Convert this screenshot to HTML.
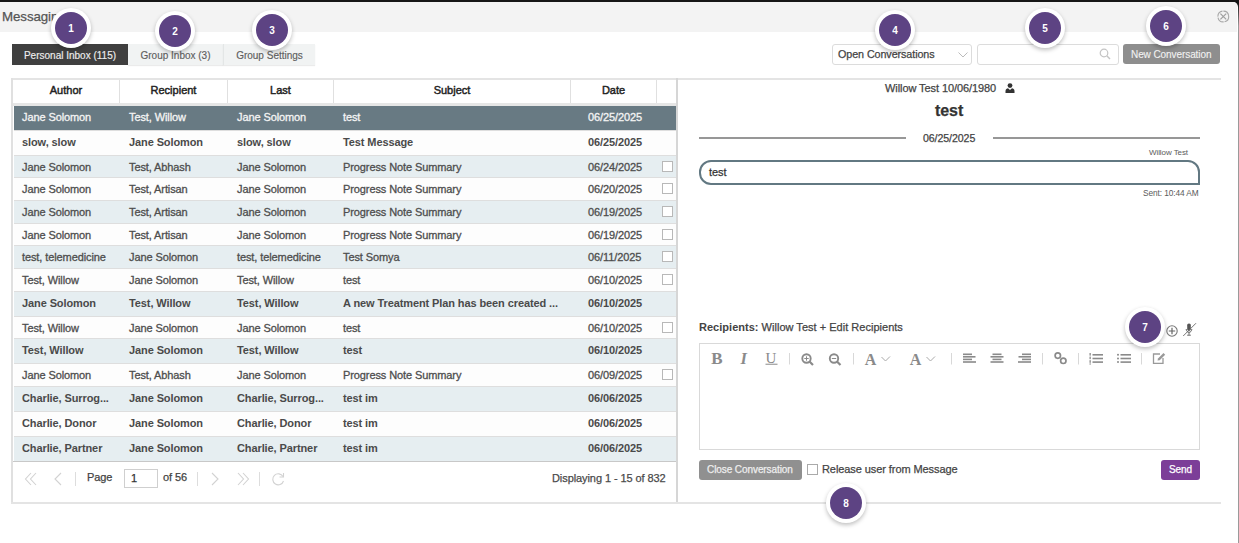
<!DOCTYPE html>
<html><head><meta charset="utf-8">
<style>
*{margin:0;padding:0;box-sizing:border-box}
html,body{width:1239px;height:543px;overflow:hidden;background:#fff;font-family:"Liberation Sans",sans-serif;color:#444}
.a{position:absolute}
#top{left:0;top:0;width:1239px;height:2px;background:#141414}
#hdr{left:0;top:2px;width:1237px;height:30px;background:#f3f3f3;border-top-right-radius:4px}
#rb{left:1238px;top:0;width:1px;height:543px;background:#9a9a9a}
.t{white-space:nowrap;position:absolute;-webkit-text-stroke:0.25px currentColor;letter-spacing:-0.08px}
.tab{position:absolute;top:44px;height:21px;font-size:10px;line-height:23px;text-align:center;-webkit-text-stroke:0.15px currentColor}
.badge{position:absolute;width:40px;height:40px;border-radius:50%;background:#fff;box-shadow:0 2px 4px rgba(0,0,0,.25)}
.badge i{position:absolute;left:4px;top:4px;width:32px;height:32px;border-radius:50%;background:#5d4383;color:#fff;font-style:normal;font-weight:bold;font-size:10px;line-height:33px;text-align:center}
.row{position:absolute;left:14px;width:662px;font-size:11px;color:#4e4e4e;-webkit-text-stroke:0.3px currentColor}
.row .c{padding-top:0;line-height:22px;letter-spacing:-0.1px}
.row.bd{font-weight:bold;color:#4a4a4a;-webkit-text-stroke:0}
.row.bd .c,.row.sl .c{padding-top:0}
.row .c{position:absolute;top:0;white-space:nowrap}
.hl{position:absolute;left:14px;width:662px;height:1px;background:#dedede}
.cb{position:absolute;left:662px;width:11px;height:11px;border:1px solid #b8b8b8;background:#fff}
.vl{position:absolute;top:80px;width:1px;height:24px;background:#e0e0e0}
.hc{position:absolute;top:79px;height:25px;line-height:23px;font-size:11px;color:#222;text-align:center;-webkit-text-stroke:0.45px currentColor}
</style></head><body>
<div class="a" id="top"></div>
<div class="a" style="left:0;top:0;width:1239px;height:543px;background:linear-gradient(#161616 0,#161616 4px,#9a9a9a 26px)"></div>
<div class="a" style="left:0;top:2px;width:1238px;height:541px;background:#fff;border-top-right-radius:5px"></div>
<div class="a" id="hdr"></div>
<div class="t" style="left:2px;top:9px;font-size:13.3px;color:#555">Messaging</div>
<!-- close icon -->
<svg class="a" style="left:1217px;top:10px" width="13" height="13" viewBox="0 0 13 13"><circle cx="6.3" cy="6.5" r="5.4" fill="none" stroke="#a8a8a8" stroke-width="1.1" stroke-dasharray="7.5 1" transform="rotate(-6 6.3 6.5)"/><path d="M3.4 3.6L9.2 9.4M9.2 3.6L3.4 9.4" stroke="#a0a0a0" stroke-width="1.2"/></svg>
<!-- tabs -->
<div class="tab" style="left:12px;width:116px;background:#3f3f3f;color:#eee">Personal Inbox (115)</div>
<div class="tab" style="left:128px;width:95px;background:#f1f3f3;color:#5e5e5e;box-shadow:0 1px 1px rgba(0,0,0,.08)">Group Inbox (3)</div>
<div class="tab" style="left:223px;width:92px;background:#f1f3f3;color:#5e5e5e;border-left:1px solid #e3e6e6;box-shadow:0 1px 1px rgba(0,0,0,.08)">Group Settings</div>

<!-- top right controls -->
<div class="a" style="left:832px;top:44px;width:140px;height:21px;border:1px solid #dcdcdc;border-radius:3px;background:#fff"></div>
<div class="t" style="left:838px;top:48px;font-size:10.75px;color:#444">Open Conversations</div>
<svg class="a" style="left:958px;top:52px" width="10" height="6" viewBox="0 0 10 6"><path d="M0.5 0.5L5 5L9.5 0.5" fill="none" stroke="#bbb" stroke-width="1"/></svg>
<div class="a" style="left:977px;top:44px;width:142px;height:21px;border:1px solid #dcdcdc;border-radius:3px;background:#fff"></div>
<svg class="a" style="left:1099px;top:48px" width="12" height="12" viewBox="0 0 12 12"><circle cx="5" cy="5" r="3.8" fill="none" stroke="#c4c4c4" stroke-width="1.2"/><path d="M7.8 7.8L11 11" stroke="#c4c4c4" stroke-width="1.4"/></svg>
<div class="a" style="left:1123px;top:44px;width:97px;height:20px;border-radius:3px;background:#8e8e8e"></div>
<div class="t" style="left:1131px;top:49px;font-size:10px;color:#f2f2f2;-webkit-text-stroke:0.1px currentColor">New Conversation</div>

<!-- table frame -->
<div class="a" style="left:11px;top:78px;width:1210px;height:2px;background:#e4e4e4"></div>
<div class="a" style="left:11px;top:78px;width:2px;height:426px;background:#e0e0e0"></div>
<div class="a" style="left:676px;top:78px;width:2px;height:426px;background:#d6d6d6"></div>
<div class="a" style="left:11px;top:502px;width:1210px;height:2px;background:#e4e4e4"></div>

<!-- header -->
<div class="vl" style="left:119px"></div>
<div class="vl" style="left:227px"></div>
<div class="vl" style="left:333px"></div>
<div class="vl" style="left:570px"></div>
<div class="vl" style="left:656px"></div>
<div class="a" style="left:13px;top:103px;width:663px;height:3px;background:#e6e6e6"></div>
<div class="hc" style="left:13px;width:106px">Author</div>
<div class="hc" style="left:120px;width:107px">Recipient</div>
<div class="hc" style="left:228px;width:105px">Last</div>
<div class="hc" style="left:334px;width:236px">Subject</div>
<div class="hc" style="left:571px;width:85px">Date</div>

<div class="row sl" style="top:106px;height:24px;line-height:24px;background:#e6eef1;background:#687a83;color:#f4f4f4"><span class="c" style="left:8px">Jane Solomon</span><span class="c" style="left:115px">Test, Willow</span><span class="c" style="left:223px">Jane Solomon</span><span class="c" style="left:329px">test</span><span class="c" style="left:574px">06/25/2025</span></div>
<div class="hl" style="top:130px"></div>
<div class="row bd" style="top:131px;height:24px;line-height:24px;background:#fdfdfd"><span class="c" style="left:8px">slow, slow</span><span class="c" style="left:115px">Jane Solomon</span><span class="c" style="left:223px">slow, slow</span><span class="c" style="left:329px">Test Message</span><span class="c" style="left:574px">06/25/2025</span></div>
<div class="hl" style="top:155px"></div>
<div class="row" style="top:156px;height:21px;line-height:21px;background:#e6eef1"><span class="c" style="left:8px">Jane Solomon</span><span class="c" style="left:115px">Test, Abhash</span><span class="c" style="left:223px">Jane Solomon</span><span class="c" style="left:329px">Progress Note Summary</span><span class="c" style="left:574px">06/24/2025</span></div>
<div class="cb" style="top:161px"></div>
<div class="hl" style="top:177px"></div>
<div class="row" style="top:178px;height:22px;line-height:22px;background:#fdfdfd"><span class="c" style="left:8px">Jane Solomon</span><span class="c" style="left:115px">Test, Artisan</span><span class="c" style="left:223px">Jane Solomon</span><span class="c" style="left:329px">Progress Note Summary</span><span class="c" style="left:574px">06/20/2025</span></div>
<div class="cb" style="top:183px"></div>
<div class="hl" style="top:200px"></div>
<div class="row" style="top:201px;height:22px;line-height:22px;background:#e6eef1"><span class="c" style="left:8px">Jane Solomon</span><span class="c" style="left:115px">Test, Artisan</span><span class="c" style="left:223px">Jane Solomon</span><span class="c" style="left:329px">Progress Note Summary</span><span class="c" style="left:574px">06/19/2025</span></div>
<div class="cb" style="top:206px"></div>
<div class="hl" style="top:223px"></div>
<div class="row" style="top:224px;height:21px;line-height:21px;background:#fdfdfd"><span class="c" style="left:8px">Jane Solomon</span><span class="c" style="left:115px">Test, Artisan</span><span class="c" style="left:223px">Jane Solomon</span><span class="c" style="left:329px">Progress Note Summary</span><span class="c" style="left:574px">06/19/2025</span></div>
<div class="cb" style="top:229px"></div>
<div class="hl" style="top:245px"></div>
<div class="row" style="top:246px;height:22px;line-height:22px;background:#e6eef1"><span class="c" style="left:8px">test, telemedicine</span><span class="c" style="left:115px">Jane Solomon</span><span class="c" style="left:223px">test, telemedicine</span><span class="c" style="left:329px">Test Somya</span><span class="c" style="left:574px">06/11/2025</span></div>
<div class="cb" style="top:251px"></div>
<div class="hl" style="top:268px"></div>
<div class="row" style="top:269px;height:22px;line-height:22px;background:#fdfdfd"><span class="c" style="left:8px">Test, Willow</span><span class="c" style="left:115px">Jane Solomon</span><span class="c" style="left:223px">Test, Willow</span><span class="c" style="left:329px">test</span><span class="c" style="left:574px">06/10/2025</span></div>
<div class="cb" style="top:274px"></div>
<div class="hl" style="top:291px"></div>
<div class="row bd" style="top:292px;height:24px;line-height:24px;background:#e6eef1"><span class="c" style="left:8px">Jane Solomon</span><span class="c" style="left:115px">Test, Willow</span><span class="c" style="left:223px">Test, Willow</span><span class="c" style="left:329px">A new Treatment Plan has been created ...</span><span class="c" style="left:574px">06/10/2025</span></div>
<div class="hl" style="top:316px"></div>
<div class="row" style="top:317px;height:21px;line-height:21px;background:#fdfdfd"><span class="c" style="left:8px">Test, Willow</span><span class="c" style="left:115px">Jane Solomon</span><span class="c" style="left:223px">Jane Solomon</span><span class="c" style="left:329px">test</span><span class="c" style="left:574px">06/10/2025</span></div>
<div class="cb" style="top:322px"></div>
<div class="hl" style="top:338px"></div>
<div class="row bd" style="top:339px;height:24px;line-height:24px;background:#e6eef1"><span class="c" style="left:8px">Test, Willow</span><span class="c" style="left:115px">Jane Solomon</span><span class="c" style="left:223px">Test, Willow</span><span class="c" style="left:329px">test</span><span class="c" style="left:574px">06/10/2025</span></div>
<div class="hl" style="top:363px"></div>
<div class="row" style="top:364px;height:22px;line-height:22px;background:#fdfdfd"><span class="c" style="left:8px">Jane Solomon</span><span class="c" style="left:115px">Test, Abhash</span><span class="c" style="left:223px">Jane Solomon</span><span class="c" style="left:329px">Progress Note Summary</span><span class="c" style="left:574px">06/09/2025</span></div>
<div class="cb" style="top:369px"></div>
<div class="hl" style="top:386px"></div>
<div class="row bd" style="top:387px;height:24px;line-height:24px;background:#e6eef1"><span class="c" style="left:8px">Charlie, Surrog...</span><span class="c" style="left:115px">Jane Solomon</span><span class="c" style="left:223px">Charlie, Surrog...</span><span class="c" style="left:329px">test im</span><span class="c" style="left:574px">06/06/2025</span></div>
<div class="hl" style="top:411px"></div>
<div class="row bd" style="top:412px;height:24px;line-height:24px;background:#fdfdfd"><span class="c" style="left:8px">Charlie, Donor</span><span class="c" style="left:115px">Jane Solomon</span><span class="c" style="left:223px">Charlie, Donor</span><span class="c" style="left:329px">test im</span><span class="c" style="left:574px">06/06/2025</span></div>
<div class="hl" style="top:436px"></div>
<div class="row bd" style="top:437px;height:24px;line-height:24px;background:#e6eef1"><span class="c" style="left:8px">Charlie, Partner</span><span class="c" style="left:115px">Jane Solomon</span><span class="c" style="left:223px">Charlie, Partner</span><span class="c" style="left:329px">test im</span><span class="c" style="left:574px">06/06/2025</span></div>
<!-- toolbar -->
<div class="a" style="left:13px;top:461px;width:663px;height:1px;background:#c8c8c8"></div>


<!-- pager -->
<svg class="a" style="left:24px;top:472px" width="14" height="14" viewBox="0 0 14 14"><path d="M7 1L1.5 7L7 13M12 1L6.5 7L12 13" fill="none" stroke="#d2d2d2" stroke-width="1.1"/></svg>
<svg class="a" style="left:53px;top:472px" width="10" height="14" viewBox="0 0 10 14"><path d="M8 1L2 7L8 13" fill="none" stroke="#d2d2d2" stroke-width="1.1"/></svg>
<div class="a" style="left:75px;top:472px;width:1px;height:14px;background:#ddd"></div>
<div class="t" style="left:87px;top:471px;font-size:11px;color:#444">Page</div>
<div class="a" style="left:124px;top:469px;width:34px;height:19px;border:1px solid #cfcfcf;background:#fff"></div>
<div class="t" style="left:131px;top:472px;font-size:11px;color:#333">1</div>
<div class="t" style="left:163px;top:471px;font-size:11px;color:#444">of 56</div>
<div class="a" style="left:197px;top:472px;width:1px;height:14px;background:#ddd"></div>
<svg class="a" style="left:210px;top:472px" width="10" height="14" viewBox="0 0 10 14"><path d="M2 1L8 7L2 13" fill="none" stroke="#d2d2d2" stroke-width="1.1"/></svg>
<svg class="a" style="left:236px;top:472px" width="14" height="14" viewBox="0 0 14 14"><path d="M2 1L7.5 7L2 13M7 1L12.5 7L7 13" fill="none" stroke="#d2d2d2" stroke-width="1.1"/></svg>
<div class="a" style="left:259px;top:472px;width:1px;height:14px;background:#ddd"></div>
<svg class="a" style="left:271px;top:472px" width="15" height="14" viewBox="0 0 15 14"><path d="M12 4.5A5.5 5.5 0 1 0 12.5 9" fill="none" stroke="#d2d2d2" stroke-width="1.1"/><path d="M12.5 1V5H8.5" fill="none" stroke="#d2d2d2" stroke-width="1.1"/></svg>
<div class="t" style="left:552px;top:472px;font-size:11px;color:#4a4a4a">Displaying 1 - 15 of 832</div>

<!-- right panel -->
<div class="t" style="left:885px;top:82px;font-size:11px;color:#444">Willow Test 10/06/1980</div>
<svg class="a" style="left:1005px;top:83px" width="10" height="10" viewBox="0 0 10 10"><circle cx="5" cy="2.6" r="2.4" fill="#333"/><path d="M0.5 10V8C0.5 6 2 5.2 3 5.2L5 7L7 5.2C8 5.2 9.5 6 9.5 8V10Z" fill="#333"/></svg>
<div class="t" style="left:935px;top:102px;font-size:16px;font-weight:bold;color:#333">test</div>
<div class="a" style="left:699px;top:137px;width:207px;height:2px;background:#979797"></div>
<div class="a" style="left:993px;top:137px;width:207px;height:2px;background:#979797"></div>
<div class="t" style="left:923px;top:132px;font-size:10.6px;color:#444">06/25/2025</div>
<div class="t" style="left:1149px;top:148px;font-size:8px;color:#5a5a5a;-webkit-text-stroke:0">Willow Test</div>
<div class="a" style="left:699px;top:160px;width:501px;height:25px;border:2px solid #627882;border-radius:12px 12px 0 12px;background:#fff"></div>
<div class="t" style="left:709px;top:166px;font-size:11px;color:#333">test</div>
<div class="t" style="left:1143px;top:188px;font-size:8.3px;color:#5a5a5a;-webkit-text-stroke:0">Sent: 10:44 AM</div>

<div class="t" style="left:699px;top:321px;font-size:11px;color:#444;letter-spacing:0.02px"><b style="-webkit-text-stroke:0">Recipients:</b> Willow Test + Edit Recipients</div>
<svg class="a" style="left:1166px;top:325px" width="13" height="13" viewBox="0 0 13 13"><circle cx="6" cy="6" r="5.2" fill="none" stroke="#777" stroke-width="1.1"/><path d="M6 2.8V9.2M2.8 6H9.2" stroke="#666" stroke-width="1.2"/></svg>
<svg class="a" style="left:1182px;top:322px" width="15" height="15" viewBox="0 0 15 15"><path d="M7 1.5C8.3 1.5 8.8 2.3 8.8 3.3V7C8.8 8 8.3 8.8 7 8.8C5.7 8.8 5.2 8 5.2 7V3.3C5.2 2.3 5.7 1.5 7 1.5Z" fill="#555"/><path d="M4.2 7C4.2 9 5.4 10.3 7 10.3C8.6 10.3 9.8 9 9.8 7M7 10.3V12.8M5.2 13.2H8.8" fill="none" stroke="#666" stroke-width="1"/><path d="M1.2 14L14 1.2" stroke="#666" stroke-width="0.9"/></svg>
<div class="a" style="left:699px;top:343px;width:501px;height:107px;border:1px solid #d9d9d9;background:#fff"></div>
<svg class="a" style="left:700px;top:348px" width="480" height="20" viewBox="700 348 480 20">
<g fill="#8a8a8a" font-family="Liberation Serif" font-weight="bold">
<text x="711.3" y="364.2" font-size="17">B</text>
<text x="740.5" y="364.2" font-size="16.5" font-style="italic">I</text>
<text x="765.6" y="362.6" font-size="15" font-weight="normal">U</text>
<text x="864.7" y="364.5" font-size="16">A</text>
<text x="909.8" y="364.5" font-size="16">A</text>
</g>
<rect x="765.5" y="363.6" width="12" height="1.4" fill="#aaa"/>
<g stroke="#d8d8d8" stroke-width="1">
<path d="M789.5 353V364.5M853.5 353V364.5M951.5 353V364.5M1042.5 353V364.5M1078.5 353V364.5M1141.5 353V364.5"/>
</g>
<g fill="none" stroke="#8a8a8a" stroke-width="1.9">
<circle cx="806.5" cy="358.5" r="4.2"/><path d="M809.5 361.5L813 365" stroke-width="2.2"/>
<circle cx="834" cy="358.5" r="4.2"/><path d="M837 361.5L840.5 365" stroke-width="2.2"/>
</g>
<g stroke="#8a8a8a" stroke-width="1">
<path d="M804.3 358.5H808.7M806.5 356.3V360.7M831.8 358.5H836.2"/>
</g>
<g fill="none" stroke="#aaa" stroke-width="1">
<path d="M881.5 357L885.5 361L890 356.5M926.5 357L930.5 361L935 356.5"/>
</g>
<g fill="#8a8a8a">
<rect x="963" y="353.5" width="9" height="1.6"/><rect x="963" y="356" width="12.5" height="1.6"/><rect x="963" y="358.6" width="9" height="1.6"/><rect x="963" y="361.2" width="13" height="1.6"/>
<rect x="992.5" y="353.5" width="9" height="1.6"/><rect x="990.5" y="356" width="13" height="1.6"/><rect x="992.5" y="358.6" width="9" height="1.6"/><rect x="990.5" y="361.2" width="13" height="1.6"/>
<rect x="1022" y="353.5" width="9" height="1.6"/><rect x="1018.5" y="356" width="12.5" height="1.6"/><rect x="1022" y="358.6" width="9" height="1.6"/><rect x="1018" y="361.2" width="13" height="1.6"/>
<rect x="1092.5" y="354" width="10.5" height="1.6"/><rect x="1092.5" y="357.7" width="10.5" height="1.6"/><rect x="1092.5" y="361.3" width="10.5" height="1.6"/>
<rect x="1089.5" y="353" width="1.3" height="2.6"/><rect x="1089.5" y="356.6" width="1.3" height="2.6"/><rect x="1089.5" y="360.2" width="1.3" height="2.6"/><rect x="1089.5" y="363.4" width="1.3" height="1.2"/>
<rect x="1120.5" y="354" width="10.5" height="1.6"/><rect x="1120.5" y="357.7" width="10.5" height="1.6"/><rect x="1120.5" y="361.3" width="10.5" height="1.6"/>
<circle cx="1118" cy="354.8" r="1"/><circle cx="1118" cy="358.5" r="1"/><circle cx="1118" cy="362.1" r="1"/>
</g>
<g fill="none" stroke="#8a8a8a" stroke-width="1.7">
<circle cx="1057.8" cy="355.6" r="2.7"/><circle cx="1063.3" cy="360.8" r="2.7"/>
</g>
<path d="M1160 354H1153.5V363.3H1163V358" fill="none" stroke="#999" stroke-width="1.3"/>
<path d="M1157.5 360.5L1158 358.5L1163.5 353L1165.2 354.7L1159.7 360.2Z" fill="#999"/>
</svg>

<div class="a" style="left:699px;top:460px;width:103px;height:20px;border-radius:3px;background:#909090"></div>
<div class="t" style="left:707px;top:464px;font-size:10px;color:#eee">Close Conversation</div>
<div class="a" style="left:807px;top:464px;width:11px;height:11px;border:1px solid #aaa;background:#fff"></div>
<div class="t" style="left:822px;top:463px;font-size:11px;color:#444">Release user from Message</div>
<div class="a" style="left:1161px;top:460px;width:39px;height:20px;border-radius:3px;background:#7c3e98"></div>
<div class="t" style="left:1169px;top:464px;font-size:10px;color:#fff">Send</div>

<!-- badges -->
<div class="badge" style="left:51px;top:8px"><i>1</i></div>
<div class="badge" style="left:155px;top:11px"><i>2</i></div>
<div class="badge" style="left:252px;top:10px"><i>3</i></div>
<div class="badge" style="left:875px;top:10px"><i>4</i></div>
<div class="badge" style="left:1025px;top:8px"><i>5</i></div>
<div class="badge" style="left:1146px;top:6px"><i>6</i></div>
<div class="badge" style="left:1125px;top:307px"><i>7</i></div>
<div class="badge" style="left:826px;top:483px"><i>8</i></div>
</body></html>
